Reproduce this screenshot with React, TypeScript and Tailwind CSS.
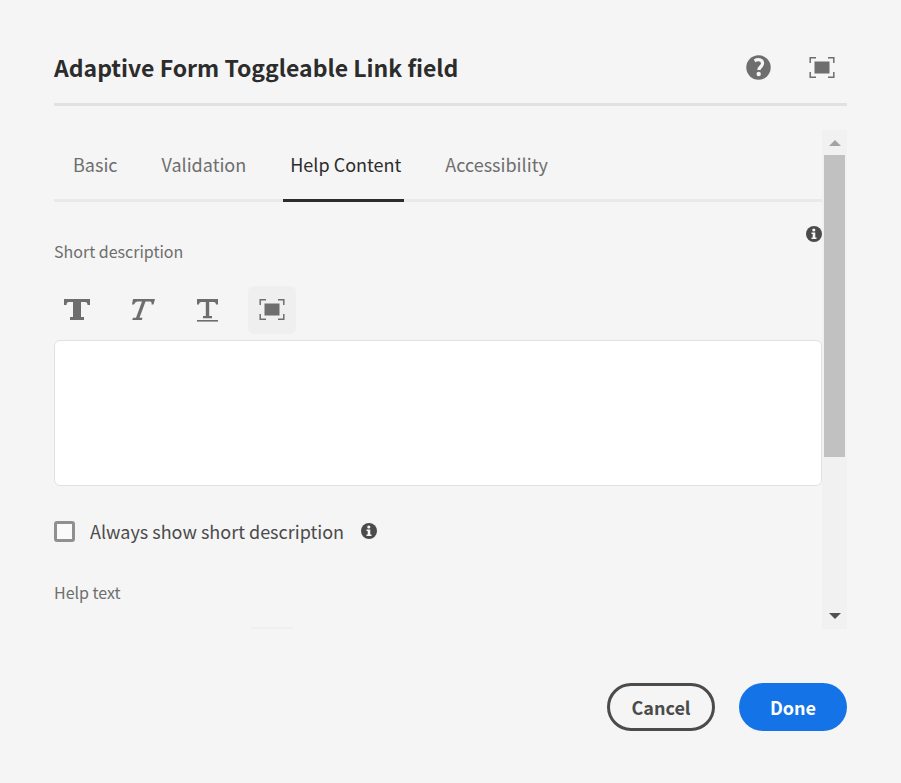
import React, { useState } from "react";

function HelpIcon() {
  return (
    <svg width="26" height="26" viewBox="0 0 26 26" aria-hidden="true">
      <circle cx="12.500" cy="12.500" r="12.200" fill="#6e6e6e" />
      <path d="M8.600 5.800C12 3.800 16.600 4.600 16.600 8.300C16.600 11.600 12.900 11.800 12.900 15" fill="none" stroke="#f5f5f5" strokeWidth="3.200" />
      <circle cx="12.700" cy="19" r="2.200" fill="#f5f5f5" />
    </svg>
  );
}

function FullscreenIcon() {
  return (
    <svg width="26" height="24" viewBox="0 0 26 24" aria-hidden="true">
      <path d="M1.200 7V1.800H7M19 1.800H24.800V7M24.800 16V21.200H19M7 21.200H1.200V16" fill="none" stroke="#6e6e6e" strokeWidth="1.500" />
      <rect x="5.500" y="5.500" width="15" height="12" fill="#6e6e6e" />
    </svg>
  );
}

function InfoIcon() {
  return (
    <svg width="16" height="16" viewBox="0 0 16 16" aria-hidden="true">
      <circle cx="8" cy="8" r="8" fill="#4b4b4b" />
      <circle cx="7.800" cy="4" r="1.600" fill="#f5f5f5" />
      <path d="M5.500 6.500H9.300V11.500H10.500V12.900H5.500V11.500H6.700V7.900H5.500Z" fill="#f5f5f5" />
    </svg>
  );
}

function BoldIcon() {
  return (
    <svg width="26" height="24" viewBox="0 0 26 24" aria-hidden="true">
      <path d="M0 1H26V7H23.500Q23.500 4 21 4H17V19H20V22H6V19H9V4H5Q2.500 4 2.500 7H0Z" fill="#6e6e6e" />
    </svg>
  );
}

function ItalicIcon() {
  return (
    <svg width="26" height="24" viewBox="0 0 26 24" aria-hidden="true">
      <path d="M4 1H26L24.500 6.500H22.500Q23 3.500 21 3.500H16.500L10.500 19.800H13.500L12.800 22H3.200L4 19.800H7L13 3.500H8.500Q6.300 3.500 5 6.500H3Z" fill="#6e6e6e" />
    </svg>
  );
}

function UnderlineIcon() {
  return (
    <svg width="26" height="24" viewBox="0 0 26 24" aria-hidden="true">
      <path d="M3 1H24V6.500H22Q22 4 20 4H15.200V18H18V20.200H9V18H11.800V4H7Q5 4 5 6.500H3Z" fill="#6e6e6e" />
      <rect x="3" y="22" width="21" height="1.600" fill="#6e6e6e" />
    </svg>
  );
}

const tabs = ["Basic", "Validation", "Help Content", "Accessibility"];

const toolButton = "flex h-12 w-12 items-center justify-center rounded-md";

function Toolbar() {
  return (
    <div className="-ml-px flex gap-[17px]">
      <button type="button" aria-label="Bold" className={toolButton}><BoldIcon /></button>
      <button type="button" aria-label="Italic" className={toolButton}><ItalicIcon /></button>
      <button type="button" aria-label="Underline" className={toolButton}><UnderlineIcon /></button>
      <button type="button" aria-label="Fullscreen" className={toolButton + " bg-[#efefef]"}><FullscreenIcon /></button>
    </div>
  );
}

export default function App() {
  const [active, setActive] = useState("Help Content");
  return (
    <main className="min-h-screen bg-[#f5f5f5] px-[54px] pt-10 pb-[52px] font-['Noto_Sans_CJK_SC',sans-serif] text-[#6e6e6e]">
      <header className="flex h-[66px] items-start justify-between border-b-[3px] border-[#e1e1e1]">
        <h1 className="text-[23px] leading-[54px] font-bold text-[#2c2c2c]">Adaptive Form Toggleable Link field</h1>
        <div className="flex h-14 items-center gap-[37px] pr-3">
          <button type="button" aria-label="Help"><HelpIcon /></button>
          <button type="button" aria-label="Toggle fullscreen"><FullscreenIcon /></button>
        </div>
      </header>

      <div className="mt-6 flex h-[499px]">
        <div className="min-w-0 flex-1 overflow-hidden">
          <div role="tablist" className="flex h-[72px] gap-[34px] border-b-[3px] border-[#e9e9e9] pl-3">
            {tabs.map((tab) => (
              <button
                key={tab}
                type="button"
                role="tab"
                aria-selected={tab === active}
                onClick={() => setActive(tab)}
                className={
                  "h-[72px] shrink-0 border-b-[3px] pr-[3px] pl-[7px] text-[18px] leading-[69px] " +
                  (tab === active ? "border-[#2c2c2c] text-[#2c2c2c]" : "border-transparent")
                }
              >
                {tab}
              </button>
            ))}
          </div>

          <div className="flex h-[84px] items-start justify-between pt-6">
            <label htmlFor="short-description" className="pt-3 text-[16px] leading-[26px]">Short description</label>
            <button type="button" aria-label="Short description information"><InfoIcon /></button>
          </div>
          <Toolbar />
          <textarea id="short-description" className="mt-[6px] block h-[146px] w-full resize-none rounded-md border border-[#e1e1e1] bg-white p-3 text-[16px]" />

          <div className="mt-8 flex h-[26px] items-center">
            <input id="always-show" type="checkbox" className="h-[21px] w-[21px] appearance-none rounded-[3px] border-[3px] border-[#909090] bg-[#fafafa] checked:bg-[#4b4b4b]" />
            <label htmlFor="always-show" className="pr-[17px] pl-[15px] text-[18px] leading-[26px] text-[#4b4b4b]">Always show short description</label>
            <button type="button" aria-label="Always show information"><InfoIcon /></button>
          </div>

          <h2 className="mt-[35px] mb-[22px] text-[16px] leading-[26px]">Help text</h2>
          <Toolbar />
        </div>

        <div className="flex w-[25px] shrink-0 flex-col items-center bg-[#f1f1f1]">
          <button type="button" aria-label="Scroll up" className="flex h-[25px] items-center">
            <svg width="12" height="6" viewBox="0 0 12 6"><path d="M0 6L6 0L12 6Z" fill="#a3a3a3" /></svg>
          </button>
          <div className="h-[302px] w-[21px] bg-[#c1c1c1]" />
          <button type="button" aria-label="Scroll down" className="mt-auto flex h-[26px] items-center">
            <svg width="12" height="6" viewBox="0 0 12 6"><path d="M0 0L6 6L12 0Z" fill="#505050" /></svg>
          </button>
        </div>
      </div>

      <footer className="mt-[54px] flex justify-end gap-6">
        <button type="button" className="h-12 w-[108px] rounded-full border-[3px] border-[#4b4b4b] text-[18px] leading-[26px] font-bold text-[#4b4b4b]">Cancel</button>
        <button type="button" className="h-12 w-[108px] rounded-full bg-[#1473e6] text-[18px] leading-[26px] font-bold text-white">Done</button>
      </footer>
    </main>
  );
}
